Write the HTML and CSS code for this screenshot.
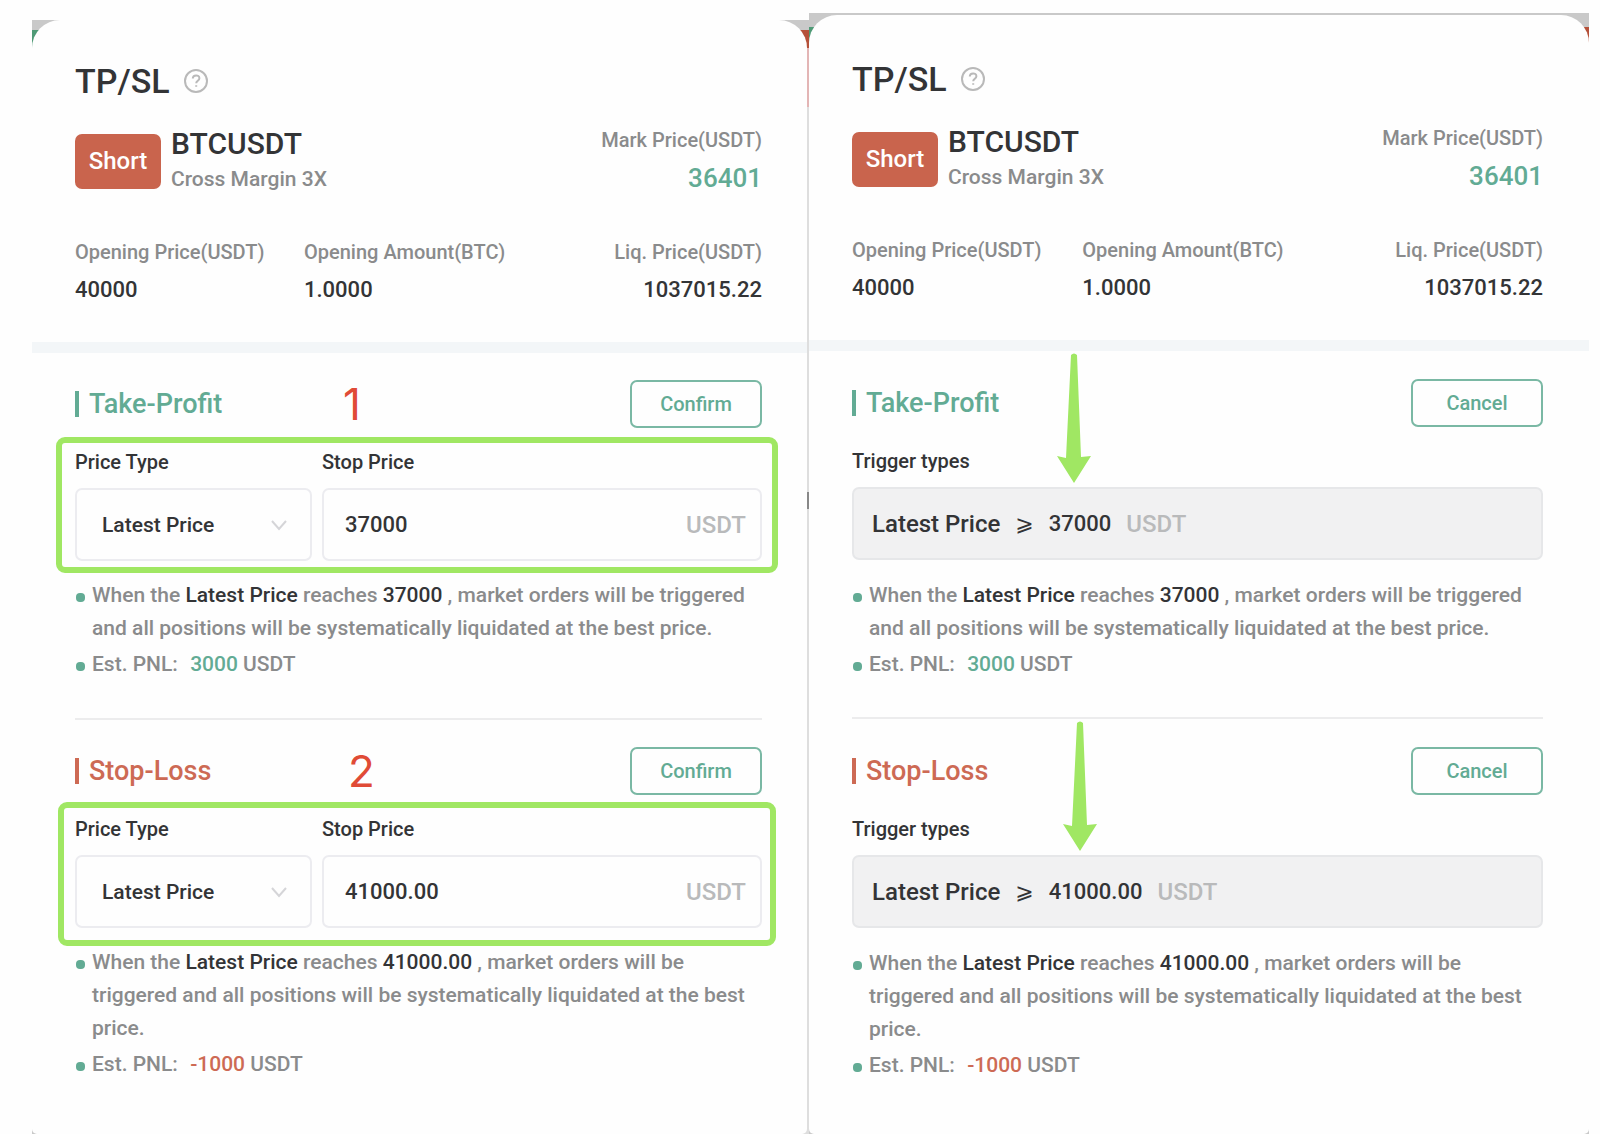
FILE: index.html
```html
<!DOCTYPE html>
<html lang="en">
<head>
  <meta charset="UTF-8">
  <meta name="viewport" content="width=device-width, initial-scale=1.0">
  <title>TP/SL</title>
  <link rel="stylesheet" href="styles.css">
</head>
<body>

<div class="screens">

  <div class="screen screen-edit">
    <div class="sheet">
      <div class="header">
        <div class="title">
          <h1>TP/SL</h1>
          <svg class="help" viewBox="0 0 24 24"><circle cx="12" cy="12" r="11"/><path d="M8.8 9.6c0-4.2 6.6-4.2 6.6-.4 0 2.4-3.2 2.6-3.2 5M12.2 16.2v1.6"/></svg>
        </div>
        <div class="position">
          <span class="badge">Short</span>
          <div>
            <div class="pair">BTCUSDT</div>
            <div class="margin">Cross Margin 3X</div>
          </div>
          <div class="mark">
            <div class="mark-label">Mark Price(USDT)</div>
            <div class="mark-value">36401</div>
          </div>
        </div>
        <dl class="stats">
          <div><dt>Opening Price(USDT)</dt><dd>40000</dd></div>
          <div><dt>Opening Amount(BTC)</dt><dd>1.0000</dd></div>
          <div><dt>Liq. Price(USDT)</dt><dd>1037015.22</dd></div>
        </dl>
      </div>

      <form class="order">
        <div class="order-head">
          <h2 class="profit">Take-Profit</h2>
          <span class="step step-1">1</span>
          <button type="button">Confirm</button>
        </div>
        <div class="fields">
          <div class="field">
            <label for="tpType">Price Type</label>
            <div class="box">
              <select id="tpType"><option>Latest Price</option></select>
              <svg class="chevron" viewBox="0 0 18 12"><path d="M2 2l7 8 7-8"/></svg>
            </div>
          </div>
          <div class="field">
            <label for="tpPrice">Stop Price</label>
            <div class="box">
              <input type="text" id="tpPrice" value="37000">
              <span class="unit">USDT</span>
            </div>
          </div>
          <div class="highlight highlight-1"></div>
        </div>
        <ul class="notes">
          <li>When the <b>Latest Price</b> reaches <b>37000</b> , market orders will be triggered and all positions will be systematically liquidated at the best price.</li>
          <li>Est. PNL: <span class="pnl profit">3000</span> USDT</li>
        </ul>
      </form>

      <form class="order">
        <div class="order-head">
          <h2 class="loss">Stop-Loss</h2>
          <span class="step step-2">2</span>
          <button type="button">Confirm</button>
        </div>
        <div class="fields">
          <div class="field">
            <label for="slType">Price Type</label>
            <div class="box">
              <select id="slType"><option>Latest Price</option></select>
              <svg class="chevron" viewBox="0 0 18 12"><path d="M2 2l7 8 7-8"/></svg>
            </div>
          </div>
          <div class="field">
            <label for="slPrice">Stop Price</label>
            <div class="box">
              <input type="text" id="slPrice" value="41000.00">
              <span class="unit">USDT</span>
            </div>
          </div>
          <div class="highlight highlight-2"></div>
        </div>
        <ul class="notes">
          <li>When the <b>Latest Price</b> reaches <b>41000.00</b> , market orders will be triggered and all positions will be systematically liquidated at the best price.</li>
          <li>Est. PNL: <span class="pnl loss">-1000</span> USDT</li>
        </ul>
      </form>
    </div>
  </div>

  <div class="screen screen-active">
    <div class="sheet">
      <div class="header">
        <div class="title">
          <h1>TP/SL</h1>
          <svg class="help" viewBox="0 0 24 24"><circle cx="12" cy="12" r="11"/><path d="M8.8 9.6c0-4.2 6.6-4.2 6.6-.4 0 2.4-3.2 2.6-3.2 5M12.2 16.2v1.6"/></svg>
        </div>
        <div class="position">
          <span class="badge">Short</span>
          <div>
            <div class="pair">BTCUSDT</div>
            <div class="margin">Cross Margin 3X</div>
          </div>
          <div class="mark">
            <div class="mark-label">Mark Price(USDT)</div>
            <div class="mark-value">36401</div>
          </div>
        </div>
        <dl class="stats">
          <div><dt>Opening Price(USDT)</dt><dd>40000</dd></div>
          <div><dt>Opening Amount(BTC)</dt><dd>1.0000</dd></div>
          <div><dt>Liq. Price(USDT)</dt><dd>1037015.22</dd></div>
        </dl>
      </div>

      <div class="order">
        <div class="order-head">
          <h2 class="profit">Take-Profit</h2>
          <button type="button">Cancel</button>
        </div>
        <div class="trigger-label">Trigger types</div>
        <div class="box trigger">
          <span>Latest Price</span>
          <span class="sign">⩾</span>
          <span class="price">37000</span>
          <span class="unit">USDT</span>
        </div>
        <ul class="notes">
          <li>When the <b>Latest Price</b> reaches <b>37000</b> , market orders will be triggered and all positions will be systematically liquidated at the best price.</li>
          <li>Est. PNL: <span class="pnl profit">3000</span> USDT</li>
        </ul>
        <svg class="arrow arrow-1" viewBox="0 0 34 130"><path d="M14 2q3-3 6 0l4 102 10-1-17 27L0 103l9 2z"/></svg>
      </div>

      <div class="order">
        <div class="order-head">
          <h2 class="loss">Stop-Loss</h2>
          <button type="button">Cancel</button>
        </div>
        <div class="trigger-label">Trigger types</div>
        <div class="box trigger">
          <span>Latest Price</span>
          <span class="sign">⩾</span>
          <span class="price">41000.00</span>
          <span class="unit">USDT</span>
        </div>
        <ul class="notes">
          <li>When the <b>Latest Price</b> reaches <b>41000.00</b> , market orders will be triggered and all positions will be systematically liquidated at the best price.</li>
          <li>Est. PNL: <span class="pnl loss">-1000</span> USDT</li>
        </ul>
        <svg class="arrow arrow-2" viewBox="0 0 34 130"><path d="M14 2q3-3 6 0l4 102 10-1-17 27L0 103l9 2z"/></svg>
      </div>
    </div>
  </div>

</div>

</body>
</html>
```

FILE: styles.css
```css
* {
  box-sizing: border-box;
}

body {
  margin: 0;
  background-color: #fefefe;
  color: #333436;
  font-family: Roboto, "Liberation Sans", sans-serif;
  font-weight: 500;
  font-size: 21px;
}

.screens {
  display: grid;
  grid-template-columns: 777fr 780fr;
  min-height: 100vh;
  padding: 0 11px 0 32px;
}

/* the trading page that shows behind the rounded sheet */
.screen {
  display: flex;
}

.screen-edit {
  margin-top: 20px;
  padding-right: 2px;
  background:
    linear-gradient(#c9c9c9 10px, #b5513a 10px, #b5513a 28px, #e3b5b5 28px, #e3b5b5 87px, #dedede 87px, #dedede 472px, #888 472px, #888 489px, #dedede 489px) right / 50% 100% no-repeat,
    linear-gradient(#c9c9c9 10px, #4f9a76 10px, #4f9a76 40px, #c9c9c9 40px);
}

.screen-active {
  margin-top: 13px;
  padding-top: 2px;
  background:
    linear-gradient(#c9c9c9 14px, #b5513a 14px, #b5513a 40px, #c9c9c9 40px) right / 50% 100% no-repeat,
    linear-gradient(#c9c9c9 14px, #4f9a76 14px, #4f9a76 40px, #c9c9c9 40px);
}

.sheet {
  flex: 1;
  background-color: #fefefe;
  border-radius: 28px 28px 5px 5px;
}

.header {
  padding: 40px 45px 30px 43px;
  border-bottom: 11px solid #f3f6f8;
}

.screen-active .header {
  padding: 43px 46px 30px 43px;
}

.title {
  display: flex;
  align-items: center;
  gap: 14px;
}

h1 {
  margin: 0;
  font-size: 34px;
  font-weight: 500;
  line-height: 42px;
}

.help {
  width: 24px;
  height: 24px;
  fill: none;
  stroke: #b9b9b9;
  stroke-width: 2;
}

.position {
  display: flex;
  align-items: center;
  gap: 10px;
  margin-top: 24px;
}

.badge {
  width: 86px;
  border-radius: 7px;
  background-color: #c9644d;
  color: #fff;
  font-size: 24px;
  line-height: 55px;
  text-align: center;
}

.pair {
  font-size: 30px;
  line-height: 36px;
}

.margin {
  color: #8a8b8c;
  line-height: 34px;
}

.mark {
  margin-left: auto;
  text-align: right;
}

.mark-label {
  color: #8a8b8c;
  font-size: 20px;
  line-height: 27px;
}

.mark-value {
  margin-top: 6px;
  color: #62ab94;
  font-size: 26px;
  line-height: 36px;
}

.stats {
  display: grid;
  grid-template-columns: repeat(3, 1fr);
  margin: 40px 0 0;
}

.stats div:last-child {
  text-align: right;
}

dt {
  color: #8a8b8c;
  font-size: 20px;
  line-height: 32px;
}

dd {
  margin: 0;
  font-size: 22px;
  line-height: 44px;
}

.order {
  position: relative;
  margin: 0 45px 0 43px;
  padding: 27px 0 37px;
}

.screen-active .order {
  margin-right: 46px;
  padding: 28px 0 36px;
}

.order + .order {
  border-top: 2px solid #ececed;
}

.order-head {
  display: flex;
  justify-content: space-between;
  align-items: center;
  position: relative;
}

h2 {
  margin: 0;
  display: flex;
  align-items: center;
  gap: 10px;
  font-size: 27px;
  font-weight: 500;
}

h2::before {
  content: "";
  width: 4px;
  height: 26px;
  background-color: currentColor;
}

.profit {
  color: #62ab94;
}

.loss {
  color: #cd6a54;
}

button {
  width: 132px;
  height: 48px;
  border: 2px solid #7ab8a4;
  border-radius: 7px;
  background-color: #fefefe;
  color: #62ab94;
  font: inherit;
  font-size: 20px;
  cursor: pointer;
}

.fields {
  display: grid;
  grid-template-columns: 237fr 440fr;
  gap: 10px;
  position: relative;
  margin-top: 17px;
}

label,
.trigger-label {
  display: block;
  margin-bottom: 9px;
  font-size: 20px;
  line-height: 34px;
}

.trigger-label {
  margin-top: 17px;
}

.box {
  display: flex;
  align-items: center;
  position: relative;
  height: 73px;
  border: 2px solid #ececf0;
  border-radius: 7px;
}

select {
  appearance: none;
  width: 100%;
  height: 100%;
  padding: 0 25px;
  border: none;
  background: none;
  color: inherit;
  font: inherit;
}

input {
  flex: 1;
  min-width: 0;
  height: 100%;
  padding: 0 21px;
  border: none;
  background: none;
  color: inherit;
  font: inherit;
  font-size: 22px;
}

.box .unit {
  padding-right: 14px;
  color: #b9babb;
  font-size: 24px;
}

.chevron {
  position: absolute;
  right: 22px;
  width: 18px;
  height: 12px;
  fill: none;
  stroke: #d5d5d8;
  stroke-width: 2;
  pointer-events: none;
}

.trigger {
  gap: 15px;
  padding: 0 18px;
  border-color: #e6e7e9;
  background-color: #f1f1f2;
  font-size: 24px;
}

.trigger .price {
  font-size: 22px;
}

.sign {
  font-family: "DejaVu Sans", sans-serif;
  font-weight: 400;
  font-size: 22px;
}

.notes {
  margin: 18px 0 0;
  padding: 0;
  list-style: none;
  color: #8a8b8c;
  line-height: 33px;
}

.screen-active .notes {
  margin-top: 19px;
}

.notes li {
  position: relative;
  padding-left: 17px;
}

.notes li + li {
  margin-top: 3px;
}

.notes li::before {
  content: "";
  position: absolute;
  left: 1px;
  top: 14px;
  width: 9px;
  height: 9px;
  border-radius: 4px;
  background-color: #62ab94;
}

.notes b {
  color: #333436;
  font-weight: 500;
}

.pnl {
  margin-left: 7px;
}

/* tutorial marks */
.step {
  position: absolute;
  color: #e04b36;
  font-family: Inter, sans-serif;
  font-weight: 400;
  font-size: 44px;
  line-height: 44px;
}

.step-1 {
  left: 268px;
}

.step-2 {
  left: 273px;
}

.highlight {
  position: absolute;
  border: 6px solid #a0e763;
  border-radius: 9px;
  pointer-events: none;
}

.highlight-1 {
  inset: -8px -16px -12px -19px;
}

.highlight-2 {
  inset: -10px -14px -18px -17px;
}

.arrow {
  position: absolute;
  top: 2px;
  width: 34px;
  height: 130px;
  fill: #a0e763;
}

.arrow-1 {
  left: 205px;
}

.arrow-2 {
  left: 211px;
}
```
